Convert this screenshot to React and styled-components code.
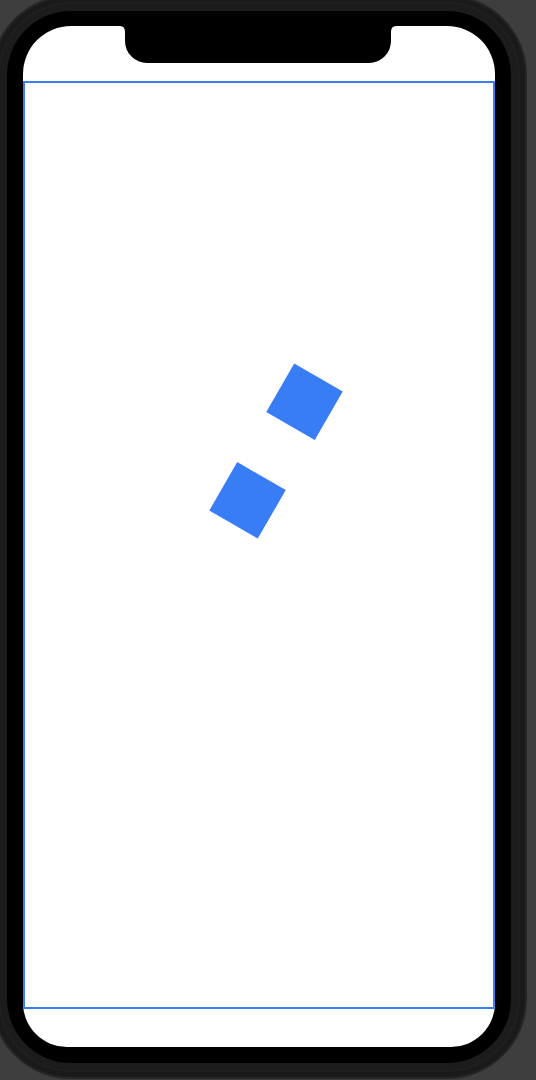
import React from "react";
import styled, { createGlobalStyle } from "styled-components";

const GlobalStyle = createGlobalStyle`
  html, body {
    margin: 0;
    padding: 0;
    background: #3e3e3e;
    overflow: hidden;
    font-family: "Liberation Sans", Arial, sans-serif;
  }
  #root {
    width: 536px;
    height: 1080px;
    overflow: hidden;
  }
`;

const Phone = styled.div`
  box-sizing: border-box;
  width: 536px;
  height: 1084px;
  margin: -5px 0 0 -9px;
  padding: 14px;
  border-radius: 80px;
  background: #1c1c1c;
  border: 2px solid #262626;
  box-shadow: inset 0 0 0 5px #1a1a1a, inset 0 0 0 7px #202020;
  display: flex;
`;

const Bezel = styled.div`
  box-sizing: border-box;
  flex: 1;
  padding: 15px 16px 16px 16px;
  border-radius: 64px;
  background: #000;
  display: flex;
`;

const Screen = styled.div`
  position: relative;
  flex: 1;
  display: flex;
  flex-direction: column;
  background: #fff;
  border-radius: 48px 48px 44px 44px;
  overflow: hidden;
`;

const SafeTop = styled.div`
  height: 55px;
  flex: none;
`;

const SafeBottom = styled.div`
  flex: 1;
`;

const Notch = styled.svg`
  position: absolute;
  top: 0;
  left: 50%;
  transform: translateX(-50%);
  margin-left: -1px;
  display: block;
`;

const Stage = styled.div`
  box-sizing: border-box;
  height: 928px;
  flex: none;
  border: 2px solid #3a7cf2;
  display: flex;
  flex-direction: column;
  align-items: flex-start;
`;

const Pair = styled.div`
  display: flex;
  gap: 58px;
  margin: 340px 0 0 166px;
  transform: rotate(-60deg);
`;

const Square = styled.div`
  width: 56px;
  height: 56px;
  background: #387cf6;
`;

export default function App() {
  return (
    <>
      <GlobalStyle />
      <Phone>
        <Bezel>
          <Screen>
            <Notch width="276" height="37" viewBox="0 0 276 37">
              <path
                d="M0 0 H276 Q271 0 271 6 V15 A22 22 0 0 1 249 37 H27 A22 22 0 0 1 5 15 V6 Q5 0 0 0 Z"
                fill="#000"
              />
            </Notch>
            <SafeTop />
            <Stage>
              <Pair>
                <Square />
                <Square />
              </Pair>
            </Stage>
            <SafeBottom />
          </Screen>
        </Bezel>
      </Phone>
    </>
  );
}
